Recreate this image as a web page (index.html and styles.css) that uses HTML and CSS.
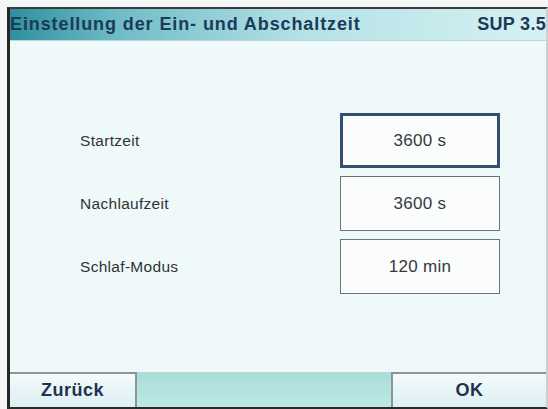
FILE: index.html
```html
<!DOCTYPE html>
<html lang="de">
<head>
<meta charset="utf-8">
<title>Einstellung der Ein- und Abschaltzeit</title>
<link rel="stylesheet" href="styles.css">
</head>
<body>
<div class="screen">
  <div class="titlebar">
    <span class="title">Einstellung der Ein- und Abschaltzeit</span>
    <span class="code">SUP 3.5</span>
  </div>
  <div class="content">
    <div class="form">
      <div class="label">Startzeit</div>
      <div class="field active">3600 s</div>
      <div class="label">Nachlaufzeit</div>
      <div class="field">3600 s</div>
      <div class="label">Schlaf-Modus</div>
      <div class="field">120 min</div>
    </div>
  </div>
  <div class="footer">
    <button class="btn back">Zurück</button>
    <div class="spacer"></div>
    <button class="btn ok">OK</button>
  </div>
</div>
</body>
</html>
```
FILE: styles.css
```css
html, body {
  margin: 0;
  padding: 0;
  background: #f4f6f6;
}
body {
  padding: 7px 0 0 7px;
  height: 409px;
  box-sizing: border-box;
  font-family: "Liberation Sans", Arial, sans-serif;
}
.screen {
  box-sizing: border-box;
  width: 541px;
  height: 402px;
  border-left: 3px solid #262626;
  border-top: 2px solid #3a3a3a;
  border-bottom: 2px solid #2a2a2a;
  border-right: 2px solid #c9d2d2;
  display: flex;
  flex-direction: column;
  background: #eff9f9;
}
.titlebar {
  height: 31px;
  display: flex;
  align-items: center;
  justify-content: space-between;
  background: linear-gradient(to right, #2f8f9e 0%, #6fbcc6 20%, #b5e2e6 55%, #d6f1f2 100%);
  border-bottom: 1px solid #b9d8da;
  color: #1c3a5a;
  font-weight: bold;
  font-size: 18px;
}
.title {
  letter-spacing: 0.9px;
}
.code {
  letter-spacing: 0.3px;
  padding-right: 0;
}
.content {
  flex: 1;
  padding: 72px 0 0 70px;
}
.form {
  display: grid;
  grid-template-columns: 260px 160px;
  grid-auto-rows: 55px;
  row-gap: 8px;
  align-items: center;
}
.label {
  font-size: 15.5px;
  color: #2e3436;
  letter-spacing: 0.3px;
}
.field {
  box-sizing: border-box;
  height: 55px;
  display: flex;
  align-items: center;
  justify-content: center;
  background: #fbfdfd;
  border: 1px solid #6b7476;
  font-size: 17px;
  letter-spacing: 0.3px;
  color: #333a3c;
}
.field.active {
  border: 3px solid #33506e;
}
.footer {
  height: 35px;
  display: flex;
  background: linear-gradient(to bottom, #a9ddd8, #bde8e4);
}
.btn {
  box-sizing: border-box;
  height: 35px;
  margin: 0;
  padding: 0;
  border: none;
  border-top: 2px solid #8d9696;
  font-family: "Liberation Sans", Arial, sans-serif;
  font-weight: bold;
  font-size: 18px;
  letter-spacing: 0.5px;
  color: #1f3250;
  background: linear-gradient(to bottom, #f3fafb, #dceff2);
}
.btn.back {
  width: 127px;
  border-right: 2px solid #8d9696;
}
.btn.ok {
  width: 155px;
  border-left: 2px solid #8d9696;
}
.spacer {
  flex: 1;
}
```
